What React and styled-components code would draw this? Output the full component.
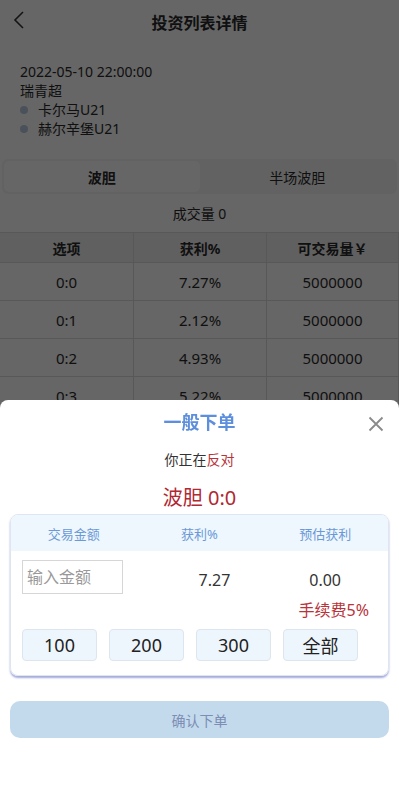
import { styled, createGlobalStyle } from "styled-components";

const GlobalStyle = createGlobalStyle`
  html, body {
    margin: 0;
    padding: 0;
    background: #fff;
    font-family: "Noto Sans", "Noto Sans CJK SC", sans-serif;
    color: #333;
  }
  * { box-sizing: border-box; }
`;

const rows = [
  { option: "0:0", rate: "7.27%", amount: "5000000" },
  { option: "0:1", rate: "2.12%", amount: "5000000" },
  { option: "0:2", rate: "4.93%", amount: "5000000" },
  { option: "0:3", rate: "5.22%", amount: "5000000" },
];

const quickAmounts = ["100", "200", "300", "全部"];

const BackIcon = () => (
  <svg width="12" height="18" viewBox="0 0 12 18" fill="none">
    <path d="M10 1 L2 9 L10 17" stroke="#333" strokeWidth="1.6" />
  </svg>
);

const CloseIcon = () => (
  <svg width="16" height="16" viewBox="0 0 16 16" fill="none">
    <path d="M1.5 1.5 L14.5 14.5 M14.5 1.5 L1.5 14.5" stroke="#8a8a8a" strokeWidth="1.8" />
  </svg>
);

const App = () => {
  return (
    <>
      <GlobalStyle />
      <Page>
        <Header>
          <BackButton>
            <BackIcon />
          </BackButton>
          <Title>投资列表详情</Title>
        </Header>
        <Info>
          <InfoLine>2022-05-10 22:00:00</InfoLine>
          <InfoLine>瑞青超</InfoLine>
          <Team>卡尔马U21</Team>
          <Team>赫尔辛堡U21</Team>
        </Info>
        <Tabs>
          <Tab active>波胆</Tab>
          <Tab>半场波胆</Tab>
        </Tabs>
        <Volume>成交量 0</Volume>
        <Table>
          <HeadCell>选项</HeadCell>
          <HeadCell>获利%</HeadCell>
          <HeadCell>可交易量￥</HeadCell>
          {rows.map((r) => (
            <Row key={r.option}>
              <Cell>{r.option}</Cell>
              <Cell>{r.rate}</Cell>
              <Cell>{r.amount}</Cell>
            </Row>
          ))}
        </Table>
      </Page>
      <Mask />
      <Sheet>
        <SheetHeader>
          <SheetTitle>一般下单</SheetTitle>
          <CloseButton>
            <CloseIcon />
          </CloseButton>
        </SheetHeader>
        <Side>
          你正在<Red>反对</Red>
        </Side>
        <Pick>波胆 0:0</Pick>
        <Card>
          <CardHead>
            <HeadLabel>交易金额</HeadLabel>
            <HeadLabel>获利%</HeadLabel>
            <HeadLabel>预估获利</HeadLabel>
          </CardHead>
          <CardBody>
            <AmountInput placeholder="输入金额" />
            <Value shift={15}>7.27</Value>
            <Value>0.00</Value>
          </CardBody>
          <Fee>手续费5%</Fee>
          <QuickRow>
            {quickAmounts.map((a) => (
              <QuickButton key={a}>{a}</QuickButton>
            ))}
          </QuickRow>
        </Card>
        <Confirm>确认下单</Confirm>
      </Sheet>
    </>
  );
};

const Page = styled.div`
  min-height: 799px;
  background: #fff;
`;

const Header = styled.div`
  position: relative;
  height: 44px;
  display: flex;
  align-items: center;
  justify-content: center;
`;

const BackButton = styled.div`
  position: absolute;
  left: 13px;
  top: 11px;
  display: flex;
`;

const Title = styled.div`
  font-size: 16px;
  font-weight: 700;
  color: #2a2a2a;
`;

const Info = styled.div`
  padding: 18px 20px 0;
  display: flex;
  flex-direction: column;
`;

const InfoLine = styled.div`
  font-size: 14px;
  line-height: 19px;
  color: #2a2a2a;
`;

const Team = styled.div`
  display: flex;
  align-items: center;
  font-size: 14px;
  line-height: 19px;
  color: #2a2a2a;

  &::before {
    content: "";
    width: 8px;
    height: 8px;
    border-radius: 50%;
    background: #b9cbe0;
    margin-right: 10px;
  }
`;

const Tabs = styled.div`
  margin: 21px 2px 0;
  height: 35px;
  display: flex;
  background: #f4f4f4;
  border-radius: 6px;
  padding: 2px;
`;

const Tab = styled.div`
  flex: 1;
  display: flex;
  align-items: center;
  justify-content: center;
  font-size: 14px;
  font-weight: ${(p) => (p.active ? 700 : 400)};
  color: #2a2a2a;
  background: ${(p) => (p.active ? "#fff" : "transparent")};
  border-radius: 5px;
`;

const Volume = styled.div`
  height: 38px;
  display: flex;
  align-items: center;
  justify-content: center;
  font-size: 14px;
  color: #2a2a2a;
`;

const Table = styled.div`
  display: grid;
  grid-template-columns: 134px 133px 1fr;
  border-top: 1px solid #dcdcdc;
`;

const HeadCell = styled.div`
  height: 30px;
  display: flex;
  align-items: center;
  justify-content: center;
  font-size: 14px;
  font-weight: 700;
  color: #2a2a2a;
  background: #f0f0f0;
  border-right: 1px solid #dcdcdc;
  border-bottom: 1px solid #dcdcdc;
`;

const Row = styled.div`
  display: contents;
`;

const Cell = styled.div`
  height: 38px;
  display: flex;
  align-items: center;
  justify-content: center;
  font-size: 15px;
  color: #2a2a2a;
  border-right: 1px solid #dcdcdc;
  border-bottom: 1px solid #dcdcdc;
`;

const Mask = styled.div`
  position: fixed;
  inset: 0;
  background: rgba(0, 0, 0, 0.6);
`;

const Sheet = styled.div`
  position: fixed;
  left: 0;
  right: 0;
  bottom: 0;
  height: 399px;
  background: #fff;
  border-radius: 8px 8px 0 0;
  padding: 0 10px;
  display: flex;
  flex-direction: column;
  align-items: stretch;
`;

const SheetHeader = styled.div`
  position: relative;
  height: 42px;
  display: flex;
  align-items: center;
  justify-content: center;
`;

const SheetTitle = styled.div`
  font-size: 18px;
  font-weight: 700;
  color: #5d8fdc;
`;

const CloseButton = styled.div`
  position: absolute;
  right: 5px;
  top: 16px;
  display: flex;
`;

const Side = styled.div`
  margin-top: 8px;
  text-align: center;
  font-size: 14px;
  line-height: 20px;
  color: #333;
`;

const Red = styled.span`
  color: #b8333a;
`;

const Pick = styled.div`
  margin-top: 14px;
  text-align: center;
  font-size: 20px;
  line-height: 28px;
  color: #b02832;
`;

const Card = styled.div`
  margin-top: 2px;
  border: 1px solid #dfe6ef;
  border-radius: 8px;
  overflow: hidden;
  box-shadow: 0 2px 2px rgba(90, 100, 190, 0.55);
  padding-bottom: 14px;
`;

const CardHead = styled.div`
  display: grid;
  grid-template-columns: repeat(3, 1fr);
  height: 36px;
  background: #eef6fe;
  align-items: center;
`;

const HeadLabel = styled.div`
  text-align: center;
  font-size: 13px;
  color: #6a99d6;
`;

const CardBody = styled.div`
  display: grid;
  grid-template-columns: repeat(3, 1fr);
  align-items: center;
  padding-top: 9px;
`;

const AmountInput = styled.input`
  margin-left: 11px;
  width: 101px;
  height: 34px;
  border: 1px solid #d6d6d6;
  padding: 0 4px;
  font-size: 16px;
  font-family: inherit;
  color: #333;
  outline: none;

  &::placeholder {
    color: #999;
  }
`;

const Value = styled.div`
  text-align: center;
  font-size: 16px;
  color: #333;
  padding-top: 6px;
  padding-left: ${(p) => (p.shift ? p.shift * 2 : 0)}px;
`;

const Fee = styled.div`
  margin-top: 5px;
  text-align: right;
  padding-right: 19px;
  font-size: 16px;
  line-height: 22px;
  color: #b8333a;
`;

const QuickRow = styled.div`
  display: flex;
  gap: 12px;
  padding: 8px 11px 0;
`;

const QuickButton = styled.div`
  width: 75px;
  height: 32px;
  display: flex;
  align-items: center;
  justify-content: center;
  background: #eef6fd;
  border: 1px solid #dde5ee;
  border-radius: 4px;
  font-size: 18px;
  color: #222;
`;

const Confirm = styled.div`
  margin-top: 25px;
  height: 37px;
  border-radius: 10px;
  background: #c3daec;
  display: flex;
  align-items: center;
  justify-content: center;
  font-size: 14px;
  color: #7d8db4;
`;

export default App;
